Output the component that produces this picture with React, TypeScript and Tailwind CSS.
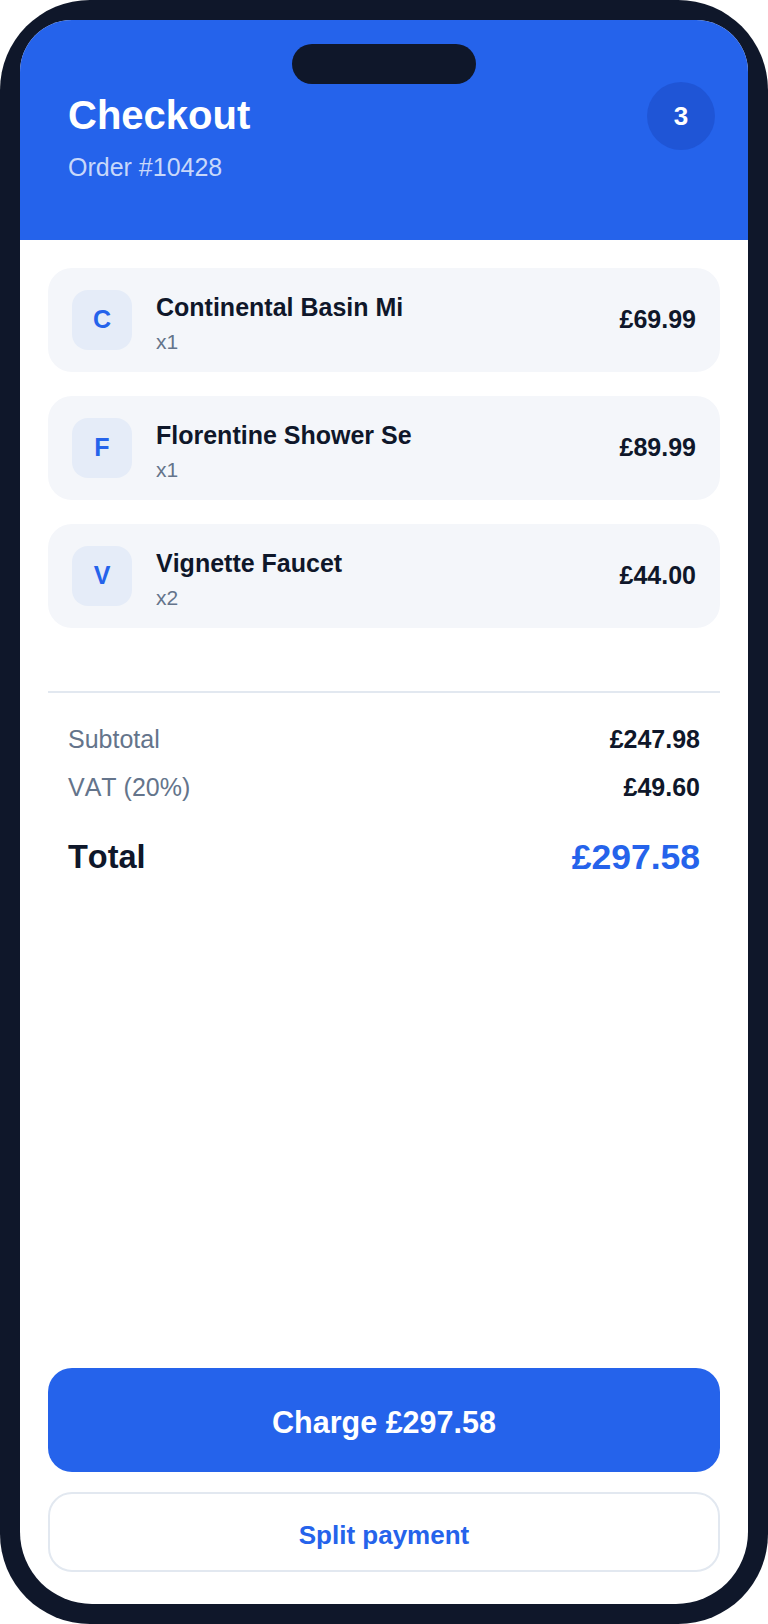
import React from 'react';

const items = [
  { name: "Continental Basin Mixer", qty: 1, price: 69.99 },
  { name: "Florentine Shower Set", qty: 1, price: 89.99 },
  { name: "Vignette Faucet", qty: 2, price: 44.0 },
];

const fmt = (n: number) => "£" + n.toFixed(2);

const App = () => {
  const subtotal = items.reduce((s, i) => s + i.qty * i.price, 0);
  const vat = Math.round(subtotal * 0.2 * 100) / 100;
  const total = subtotal + vat;

  return (
    <div className="w-[768px] h-[1624px] bg-white font-['Liberation_Sans',Arial,sans-serif] [font-kerning:none]">
      <div className="h-full bg-[#0f172a] rounded-[90px] p-5">
        <div className="h-full bg-white rounded-t-[52px] rounded-b-[72px] overflow-hidden flex flex-col">
          {/* header */}
          <div className="relative bg-[#2563eb] h-[220px] shrink-0 pl-12 pr-[33px] pt-[62px] flex justify-between items-start">
            <div className="absolute top-6 left-1/2 -translate-x-1/2 w-[184px] h-10 rounded-full bg-[#0f172a]" />
            <div className="mt-[13px]">
              <h1 className="text-[40px] leading-none font-bold text-white">Checkout</h1>
              <p className="mt-5 text-[25px] leading-none text-white/75">Order #10428</p>
            </div>
            <div className="w-[68px] h-[68px] rounded-full bg-[#1f55d6] flex items-center justify-center text-white font-bold text-[26px]">
              {items.length}
            </div>
          </div>

          {/* items */}
          <div className="px-7 pt-7">
            <div className="flex flex-col gap-6">
              {items.map((item) => (
                <div key={item.name} className="flex items-center h-[104px] px-6 rounded-3xl bg-[#f4f6fa]">
                  <div className="w-[60px] h-[60px] shrink-0 rounded-2xl bg-[#e5ecf8] flex items-center justify-center text-[#2563eb] font-bold text-[25px]">
                    {item.name[0]}
                  </div>
                  <div className="ml-6 flex-1 min-w-0 pt-[6px]">
                    <p className="text-[25px] leading-[29px] font-bold text-[#0f172a] whitespace-nowrap">
                      {item.name.slice(0, 20)}
                    </p>
                    <p className="mt-2 text-[21px] leading-[24px] text-[#64748b]">x{item.qty}</p>
                  </div>
                  <span className="text-[25px] font-bold text-[#0f172a]">{fmt(item.price)}</span>
                </div>
              ))}
            </div>

            <div className="mt-[63px] h-[2px] bg-[#e2e8f0]" />

            <div className="px-5 pt-8">
              <div className="flex justify-between items-center text-[25px] leading-[29px]">
                <span className="text-[#64748b]">Subtotal</span>
                <span className="font-bold text-[#0f172a]">{fmt(subtotal)}</span>
              </div>
              <div className="mt-[19px] flex justify-between items-center text-[25px] leading-[29px]">
                <span className="text-[#64748b]">VAT (20%)</span>
                <span className="font-bold text-[#0f172a]">{fmt(vat)}</span>
              </div>
              <div className="mt-[29px] flex justify-between items-center">
                <span className="text-[32.5px] font-bold text-[#0f172a]">Total</span>
                <span className="text-[35.5px] font-bold text-[#2563eb]">{fmt(total)}</span>
              </div>
            </div>
          </div>

          {/* actions */}
          <div className="mt-auto px-7 pb-8 flex flex-col gap-5">
            <button className="h-[104px] rounded-3xl bg-[#2563eb] text-white font-bold text-[30.5px] pt-[6px]">
              Charge {fmt(total)}
            </button>
            <button className="h-20 rounded-3xl border-2 border-[#e2e8f0] bg-white text-[#2563eb] font-bold text-[26px] pt-[6px]">
              Split payment
            </button>
          </div>
        </div>
      </div>
    </div>
  );
};

export default App;
